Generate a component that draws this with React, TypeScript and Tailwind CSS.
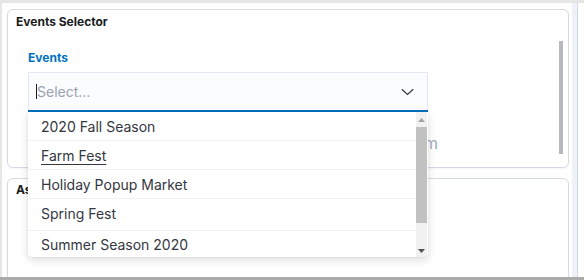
import React from "react";

const items: { label: string; h: string; underline?: boolean; extra?: string }[] = [
  { label: "2020 Fall Season", h: "h-[29px]" },
  { label: "Farm Fest", h: "h-[29px]", underline: true },
  { label: "Holiday Popup Market", h: "h-[29px]" },
  { label: "Spring Fest", h: "h-[32px]", extra: "pb-[3px]" },
  { label: "Summer Season 2020", h: "h-[26px]" },
];

function Dropdown() {
  return (
    <div className="absolute left-0 top-full z-50 w-[400px] h-[145px] flex bg-white rounded-b-[4px] shadow-[0_3px_8px_rgba(0,0,0,0.14),0_0_2px_rgba(0,0,0,0.08)] overflow-hidden">
      <div className="flex-1 min-w-0 flex flex-col">
        {items.map((it, i) => (
          <div
            key={it.label}
            className={`${it.h} shrink-0 flex items-center pl-[13px] text-[14px] text-[#343741] ${
              i < items.length - 1 ? "border-b border-[#eef1f5]" : ""
            } ${it.extra ?? ""}`}
          >
            <span className={it.underline ? "underline underline-offset-[3px]" : ""}>{it.label}</span>
          </div>
        ))}
      </div>
      <div className="w-[11px] shrink-0 bg-[#f1f1f1] flex flex-col mr-[1px]">
        <div className="h-[15px] flex items-center justify-center">
          <svg width="7" height="4" viewBox="0 0 7 4">
            <path d="M0 4 L3.5 0 L7 4 Z" fill="#a3a3a3" />
          </svg>
        </div>
        <div className="h-[96px] bg-[#c1c1c1]" />
        <div className="flex-1" />
        <div className="h-[13px] flex items-center justify-center">
          <svg width="7" height="4" viewBox="0 0 7 4">
            <path d="M0 0 L7 0 L3.5 4 Z" fill="#505050" />
          </svg>
        </div>
      </div>
    </div>
  );
}

export default function App() {
  return (
    <div className="w-[584px] h-[280px] overflow-hidden bg-white flex flex-col font-['Inter',sans-serif]">
      <div className="h-[3px] shrink-0 bg-[#e6e6e6]" />
      <div className="flex flex-1 min-h-0">
        <div className="w-[2px] shrink-0 bg-[#e6e6e6]" />
        <div className="w-[567px] shrink-0 flex flex-col gap-[10px] pt-[6px] pl-[5px] overflow-hidden">
          {/* Card 1 */}
          <div className="h-[159px] shrink-0 border border-[#d3dae6] rounded-[6px] bg-white shadow-[0_1px_2px_rgba(0,0,0,0.04)] flex flex-col">
            <div className="pt-[4px] pl-[8px] text-[12px] leading-[16px] font-bold text-[#1a1c21]">
              Events Selector
            </div>
            <div className="flex flex-1 min-h-0">
              <div className="flex-1 min-w-0 pl-[20px] flex flex-col">
                <div className="mt-[20px] text-[12px] leading-[16px] font-bold text-[#0071c2]">Events</div>
                <div className="relative mt-[6px] w-[400px]">
                  <div className="h-[38px] bg-[#fbfcfd] border border-b-0 border-[#e3e8f2] flex items-center justify-between">
                    <div className="flex items-center pl-[7px]">
                      <span className="w-[1px] h-[15px] bg-[#1a1c21]" />
                      <span className="text-[14px] text-[#98a2b3]">Select...</span>
                    </div>
                    <svg className="mr-[13px]" width="13" height="8" viewBox="0 0 13 8" fill="none">
                      <path d="M0.8 1.2 L6.5 6.4 L12.2 1.2" stroke="#343741" strokeWidth="1.2" />
                    </svg>
                  </div>
                  <div className="h-[2px] bg-[#0071c2]" />
                  <Dropdown />
                </div>
                <div className="mt-[21px] w-[410px] text-right text-[16px] leading-[20px] text-[#a2abba] whitespace-nowrap overflow-hidden">
                  Pick one or more events to assign to this program
                </div>
              </div>
              <div className="mt-[11px] mr-[5px] w-[4px] h-[113px] bg-[#b5b8bc]" />
            </div>
          </div>
          {/* Card 2 */}
          <div className="h-[200px] shrink-0 border border-[#d3dae6] rounded-[6px] bg-white shadow-[0_1px_2px_rgba(0,0,0,0.04)]">
            <div className="pt-[3px] pl-[8px] text-[12px] leading-[16px] font-bold text-[#1a1c21]">
              Assignments
            </div>
          </div>
        </div>
        <div className="flex-1 flex">
          <div className="ml-[3px] w-[6px] bg-[#eef2f8] border-r border-[#d3dae6]" />
          <div className="flex-1 bg-white" />
        </div>
      </div>
      <div className="h-[3px] shrink-0 bg-[#ababab]" />
    </div>
  );
}
